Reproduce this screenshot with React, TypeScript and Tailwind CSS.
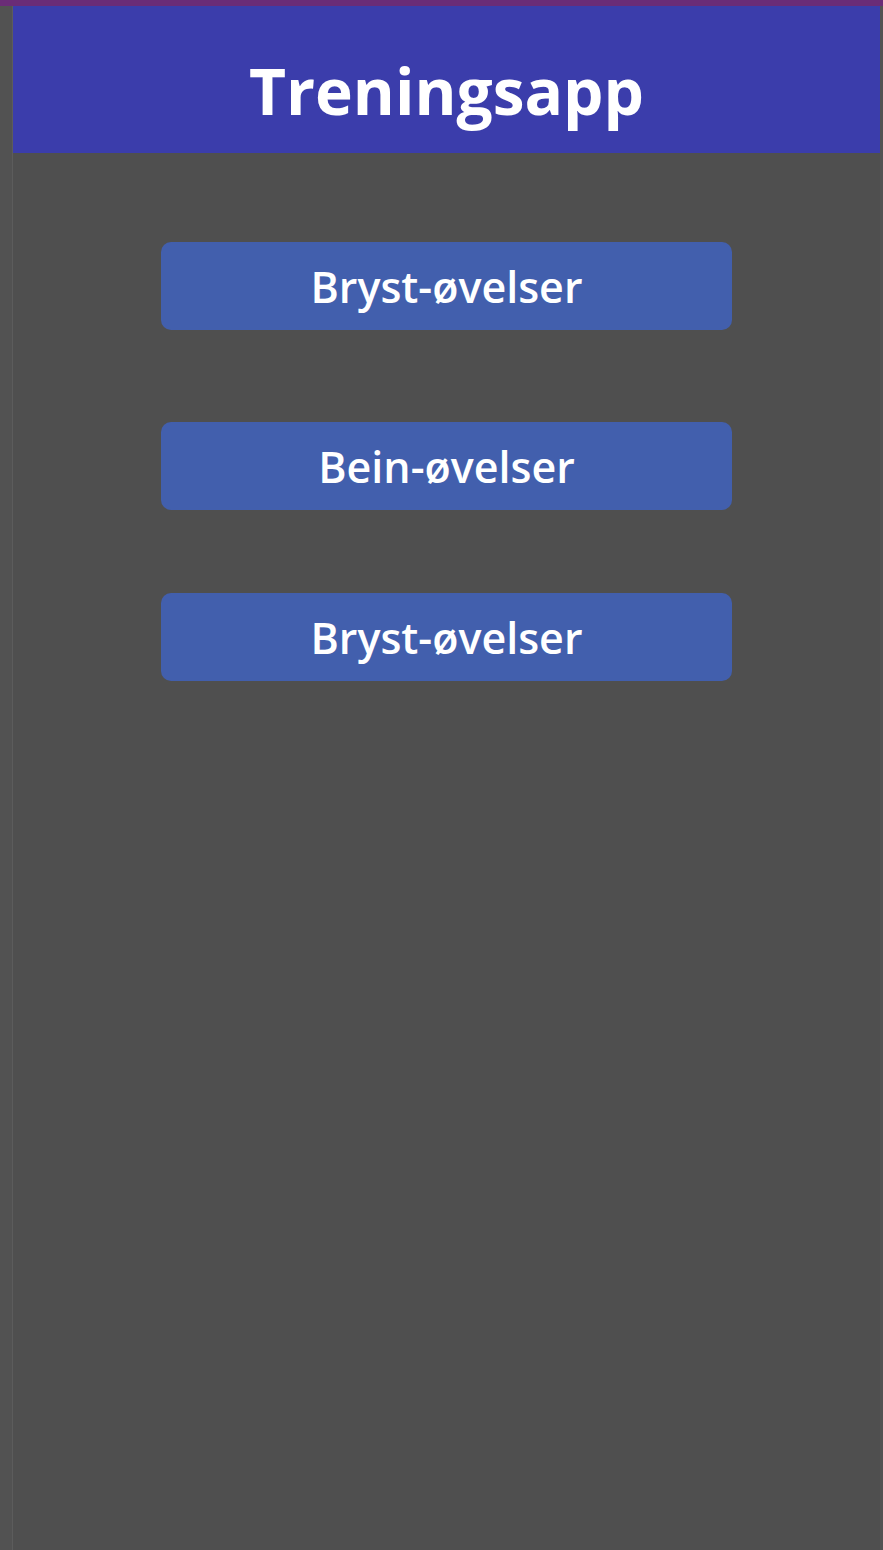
export default function App() {
  const buttons = [
    { label: "Bryst-øvelser", mt: "mt-[89px]" },
    { label: "Bein-øvelser", mt: "mt-[92px]" },
    { label: "Bryst-øvelser", mt: "mt-[83px]" },
  ];
  return (
    <div
      className="w-[883px] h-[1550px] flex flex-col bg-[#4f4f4f] overflow-hidden"
      style={{ fontFamily: '"Open Sans", "Noto Sans", sans-serif' }}
    >
      <div className="h-[6px] bg-[#6a2c77] shrink-0" />
      <div className="flex flex-1">
        <div className="w-[13px] bg-[#525252] border-r border-[#5c5c5c] shrink-0" />
        <div className="flex-1 flex flex-col">
          <div className="h-[147px] bg-[#3b3dab] flex items-center justify-center">
            <h1 className="text-white font-bold text-[64px] leading-none mt-[22px]">
              Treningsapp
            </h1>
          </div>
          <div className="flex flex-col items-center">
            {buttons.map((b, i) => (
              <button
                key={i}
                className={`${b.mt} w-[571px] h-[88px] rounded-[10px] bg-[#425fad] text-white font-semibold text-[43px] leading-none flex items-center justify-center`}
              >
                {b.label}
              </button>
            ))}
          </div>
        </div>
        <div className="w-[3px] bg-[#525252] shrink-0" />
      </div>
    </div>
  );
}
